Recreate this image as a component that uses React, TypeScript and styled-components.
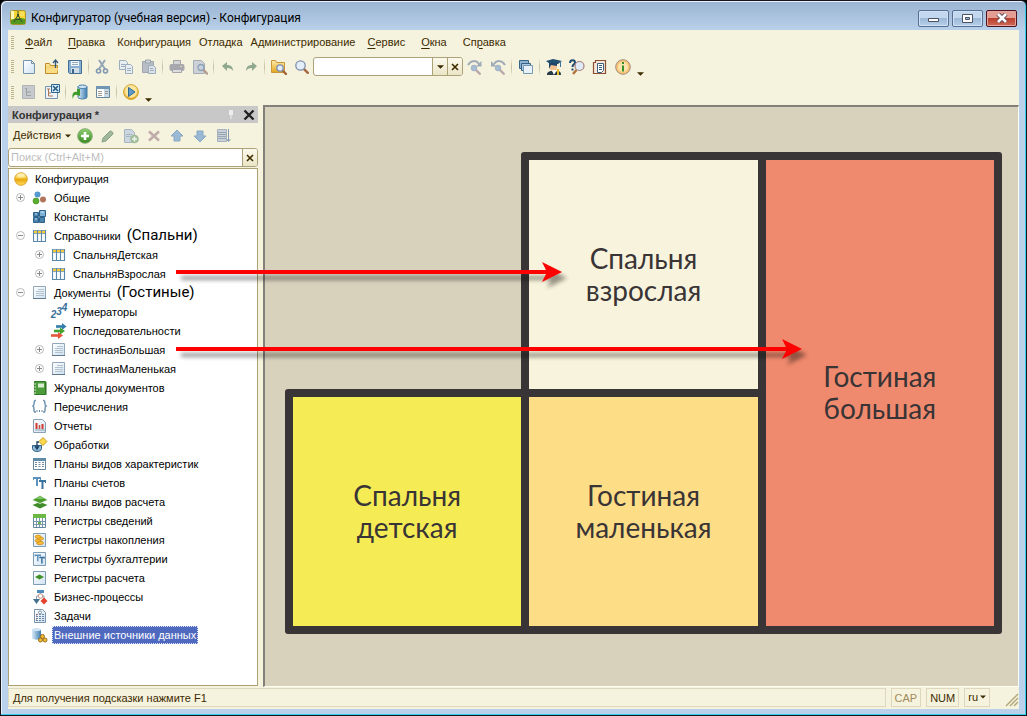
import React, { useState } from "react";
import styled, { createGlobalStyle } from "styled-components";

const UI = `"Liberation Sans", Arial, sans-serif`;
const CAPTION = `Roboto, "Noto Sans", sans-serif`;
const CREAM = "#f5f2dd";
const INK = "#3d2b00";
const EDGE = "#ada178";
const WALL = "#393435";

const GlobalStyle = createGlobalStyle`
  * { box-sizing: border-box; }
  body { margin: 0; background: #000; font: 11px/19px ${UI}; color: #000; }
  button, input { font: inherit; color: inherit; margin: 0; padding: 0; border: 0; background: none; }
  ul { list-style: none; margin: 0; padding: 0; }
`;

/* ---------- window ---------- */

const Window = styled.div`
  min-height: 100vh;
  display: flex;
  flex-direction: column;
  padding: 1px 7px 6px;
  border: 1px solid #16161c;
  border-radius: 6px 6px 0 0;
  background: linear-gradient(#9ab3d1, #b9d1ea 30px);
  box-shadow: inset -1px -1px 0 #35cdea, inset 1px 1px 0 #e9f1fa;
`;

const TitleBar = styled.header`
  display: flex;
  align-items: center;
  height: 28px;
  gap: 5px;
  padding: 4px 2px 0 2px;
`;

const Title = styled.h1`
  flex: 1;
  margin: 0;
  font: 400 12px/20px ${CAPTION};
`;

const WindowButtons = styled.div`
  display: flex;
  gap: 3px;
`;

const WindowButton = styled.button<{ $danger?: boolean }>`
  display: flex;
  align-items: center;
  justify-content: center;
  width: 31px;
  height: 17px;
  border: 1px solid ${(p) => (p.$danger ? "#4c1220" : "#566f92")};
  border-radius: 2px;
  background: ${(p) =>
    p.$danger
      ? "linear-gradient(#e39d92 45%, #bb3f2b 50%, #cf6a58)"
      : "linear-gradient(#c3d8ee 45%, #9db9d8 50%, #b6cfea)"};
  box-shadow: inset 0 0 0 1px ${(p) => (p.$danger ? "#e5a599" : "#cfe1f4")};
`;

const Body = styled.div`
  position: relative;
  flex: 1;
  display: flex;
  flex-direction: column;
  background: ${CREAM};
`;

/* ---------- menu and toolbars ---------- */

const Bar = styled.div<{ $height: number }>`
  display: flex;
  align-items: center;
  height: ${(p) => p.$height}px;
  padding-left: 3px;
`;

const Grip = styled.span`
  width: 3px;
  height: 13px;
  margin-right: 3px;
  background: repeating-linear-gradient(#bcb48f 0 1px, transparent 1px 2px);
`;

const MenuItem = styled.button<{ $wide: boolean }>`
  padding: 0 ${(p) => (p.$wide ? 8 : 4)}px;
  color: ${INK};
  white-space: nowrap;
  u { text-underline-offset: 2px; }
`;

const MenuList = styled.nav`
  display: flex;
`;

const ToolButton = styled.button`
  display: flex;
  flex: none;
  align-items: center;
  justify-content: center;
  width: 23px;
  height: 22px;
`;

const Separator = styled.span`
  width: 1px;
  height: 18px;
  margin: 0 2px;
  background: linear-gradient(transparent, #c4bda0, transparent);
`;

const Overflow = styled.button`
  align-self: flex-end;
  display: flex;
  width: 12px;
  height: 10px;
  align-items: center;
  justify-content: center;
`;

const Field = styled.div<{ $width?: string }>`
  display: flex;
  width: ${(p) => p.$width || "auto"};
  height: 19px;
  border: 1px solid ${EDGE};
  border-radius: 3px;
  background: #fff;
  overflow: hidden;
  input {
    flex: 1;
    min-width: 0;
    padding: 0 2px;
    outline: 0;
  }
  input::placeholder { color: #bdbdbd; opacity: 1; }
`;

const FieldButton = styled.button`
  display: flex;
  align-items: center;
  justify-content: center;
  width: 15px;
  border-left: 1px solid ${EDGE};
  background: linear-gradient(#fbf9ec, #ebe5c6);
`;

/* ---------- configuration panel ---------- */

const Workspace = styled.main`
  flex: 1;
  display: flex;
  gap: 5px;
`;

const Panel = styled.aside`
  flex: none;
  display: flex;
  flex-direction: column;
  width: 250px;
  padding: 1px 0;
`;

const PanelHeader = styled.div`
  display: flex;
  align-items: center;
  height: 17px;
  padding: 0 3px 0 4px;
  background: #c8c8c8;
  h2 {
    flex: 1;
    margin: 0;
    font-size: 11px;
    line-height: 16px;
    color: #333;
  }
`;

const PinButton = styled.button`
  display: flex;
  margin-right: 9px;
`;

const PanelClose = styled.button`
  display: flex;
`;

const PanelTools = styled.div`
  display: flex;
  align-items: center;
  height: 25px;
  padding-left: 5px;
`;

const ActionsButton = styled.button`
  display: flex;
  align-items: center;
  justify-content: space-between;
  width: 58px;
  margin-right: 2px;
  color: ${INK};
`;

const Tree = styled.ul`
  flex: 1;
  margin-top: 1px;
  padding-bottom: 40px;
  border: 1px solid ${EDGE};
  background: #fff;
`;

const TreeRow = styled.li<{ $level: number }>`
  display: flex;
  align-items: center;
  height: 19px;
  padding-left: ${(p) => (p.$level ? (p.$level - 1) * 19 : 4)}px;
  white-space: nowrap;
`;

const Expander = styled.span`
  display: flex;
  flex: none;
  width: 23px;
  padding-left: 7px;
  button { display: flex; }
`;

const TreeLabel = styled.span<{ $selected?: boolean }>`
  height: 18px;
  margin-left: 4px;
  padding: 0 1px;
  line-height: 16px;
  border: 1px dotted ${(p) => (p.$selected ? "#dfe6ff" : "transparent")};
  background: ${(p) => (p.$selected ? "#4f69bf" : "transparent")};
  color: ${(p) => (p.$selected ? "#fff" : "#000")};
`;

const Note = styled.span`
  margin-left: 4px;
  font: 15px/17px ${CAPTION};
`;

/* ---------- plan ---------- */

const Canvas = styled.section`
  flex: 1;
  display: flex;
  padding: 45px 16px 52px 20px;
  border: 2px solid #828078;
  border-right: 1px solid #fffef5;
  border-bottom: 1px solid #fffef5;
  background: #d8d2bd;
`;

const FloorPlan = styled.div`
  flex: 1;
  display: grid;
  grid-template-columns: repeat(3, 1fr);
  grid-template-rows: repeat(2, 1fr);
  grid-template-areas: ". adult big" "child small big";
  padding: 4px;
`;

/* Neighbouring rooms share one wall: each overlaps the next by half its thickness. */
const Room = styled.div<{ $area: string; $color: string }>`
  grid-area: ${(p) => p.$area};
  display: flex;
  align-items: center;
  justify-content: center;
  margin: -4px;
  padding-bottom: 2px;
  border: 8px solid ${WALL};
  border-radius: 3px;
  text-align: center;
  background: ${(p) => p.$color};
  font: 400 28px/32px Lato, sans-serif;
  color: ${WALL};
`;

const Arrows = styled.svg`
  position: absolute;
  left: 0;
  top: 0;
  pointer-events: none;
`;

/* ---------- status bar ---------- */

const StatusBar = styled.footer`
  display: flex;
  align-items: center;
  gap: 5px;
  height: 22px;
  padding-bottom: 2px;
  color: ${INK};
`;

const StatusCell = styled.div<{ $grow?: boolean; $dim?: boolean }>`
  flex: ${(p) => (p.$grow ? 1 : "none")};
  height: 19px;
  padding: 0 ${(p) => (p.$grow ? 4 : 3)}px;
  line-height: 18px;
  border: 1px solid #ddd7bd;
  color: ${(p) => (p.$dim ? "#a08b5a" : INK)};
`;

const LanguageButton = styled.button`
  display: flex;
  align-items: center;
  gap: 2px;
  height: 19px;
  padding: 0 3px;
  border: 1px solid #ddd7bd;
`;

/* ---------- icons ---------- */

const Gradients = () => (
  <svg width="0" height="0" style={{ position: "absolute" }} aria-hidden="true">
    <defs>
      <linearGradient id="paper" x2="1" y2="1"><stop stopColor="#fff" /><stop offset="1" stopColor="#cfe2f2" /></linearGradient>
      <linearGradient id="gold" x2="0" y2="1"><stop stopColor="#ffedaa" /><stop offset="1" stopColor="#e3a51c" /></linearGradient>
      <linearGradient id="blue" x2="1"><stop stopColor="#d9ebf7" /><stop offset="1" stopColor="#3e7db1" /></linearGradient>
      <linearGradient id="green" x2="0" y2="1"><stop stopColor="#8fd073" /><stop offset="1" stopColor="#36871f" /></linearGradient>
      <linearGradient id="ball" x2="0" y2="1"><stop stopColor="#fff0ae" /><stop offset=".4" stopColor="#f8cf4a" /><stop offset=".55" stopColor="#e9a70f" /><stop offset="1" stopColor="#ffdf5e" /></linearGradient>
    </defs>
  </svg>
);

const lens = (cx: number, cy: number, r: number, fill = "#e3eefa", stroke = "#7e8fae", handle = "#a5683e") => (
  <>
    <path d={`M${cx + r * 0.7} ${cy + r * 0.7}l4 4`} stroke={handle} strokeWidth="2.4" strokeLinecap="round" />
    <circle cx={cx} cy={cy} r={r} fill={fill} stroke={stroke} strokeWidth="1.3" />
  </>
);

const table = (
  <>
    <path d="M1.500 2h4v12h-4zM6 2h4v12H6zM10.500 2h4v12h-4z" fill="#eef6fb" />
    <path d="M1 2h13v4H1z" fill="#8ba7b4" />
    <path d="M1.500 2v12M5.500 2v12M9.500 2v12M13.500 2v12M1 13.500h13" stroke="#5c88aa" />
    <path d="M2 3h3v2H2zM6 3h3v2H6zM10 3h3v2h-3z" fill="#f7ca35" />
    <path d="M3 7h1v6H3zM7 7h1v6H7zM11 7h1v6h-1z" fill="#fff" />
  </>
);

const docLines = (
  <>
    <path d="M1.500 1.500h12v12h-12z" fill="url(#paper)" stroke="#93a7b8" />
    <path d="M1 13.500h13" stroke="#61788c" />
    <path d="M6 4.500h6M4 6.500h8M4 8.500h8M4 10.500h8" stroke="#b4c3d0" />
  </>
);

const tt = (
  <>
    <path d="M1 3h8M5 3v8" stroke="#5a91be" strokeWidth="2" />
    <path d="M1.500 2v3M8.500 2v3" stroke="#5a91be" />
    <path d="M7 6h7M10.500 6v8" stroke="#38729f" strokeWidth="2" />
    <path d="M13.500 5v3" stroke="#38729f" />
  </>
);

const framed = <path d="M1.500 1.500h12v13h-12z" fill="url(#paper)" stroke="#7f9db5" />;

const ICONS: Record<string, React.ReactNode> = {
  app: (
    <>
      <rect x="0.500" y="0.500" width="15" height="14" rx="2" fill="#f7d535" stroke="#a5952a" />
      <path d="M1 10c4-2 9-3 14-1v5H1z" fill="#55981f" />
      <path d="M1 1h3v8H1z" fill="#fff6bd" />
      <path d="M4 12l4-7 4 7M8 1v5M5.500 9.500h5" stroke="#3b4f2a" fill="none" />
      <path d="M7 4h2v3H7z" fill="#3b4f2a" />
      <path d="M10 3h4M10 5h4" stroke="#fbe988" />
    </>
  ),
  new: <path d="M2.500 1.500h8l3 3v10h-11zM10.500 1.500v3h3" fill="url(#paper)" stroke="#7894ad" />,
  open: (
    <>
      <path d="M1.500 14.500v-10h4l1 2h7v8z" fill="url(#gold)" stroke="#bf8c28" />
      <path d="M2 9h12l-1 5H2z" fill="#fbdc86" />
      <path d="M11.500 9V2M9 4l2.500-3L14 4" stroke="#31577a" fill="none" strokeWidth="1.300" />
    </>
  ),
  save: (
    <>
      <path d="M1.500 1.500h13v13h-12l-1-1z" fill="#86afd2" stroke="#436d93" />
      <path d="M4 2h8v5H4z" fill="#f3f8fc" />
      <path d="M5 3.500h6M5 5.500h6" stroke="#9ab" />
      <path d="M4 9h8v5H4z" fill="#d2dce5" />
      <path d="M5 10h2v4H5z" fill="#3d6589" />
    </>
  ),
  cut: (
    <>
      <path d="M4 1l6 9M10 1L4 10" stroke="#93a6b8" strokeWidth="2" />
      <circle cx="3.500" cy="12" r="2" fill="none" stroke="#8197b0" strokeWidth="1.600" />
      <circle cx="10.500" cy="12" r="2" fill="none" stroke="#8197b0" strokeWidth="1.600" />
    </>
  ),
  copy: (
    <g stroke="#9badbf" fill="#e8edf0">
      <path d="M1.500 1.500h6l2 2v7h-8z" />
      <path d="M3 5.500h4M3 7.500h4" />
      <path d="M7.500 5.500h5l2 2v7h-7z" />
      <path d="M9 9.500h4M9 11.500h4" />
    </g>
  ),
  paste: (
    <>
      <path d="M1.500 2.500h11v11h-11z" fill="#b9bec4" stroke="#a0a7b0" />
      <path d="M4.500 1h5v3h-5z" fill="#cfd4d9" stroke="#99a3ad" />
      <path d="M7.500 6.500h5l2 2v6h-7z" fill="#dce1e7" stroke="#9badbf" />
      <path d="M9 9.500h3M9 11.500h4" stroke="#9badbf" />
    </>
  ),
  print: (
    <>
      <path d="M4.500 1.500h7v5h-7z" fill="#d4d4d4" stroke="#a4a5aa" />
      <rect x="0.500" y="5" width="15" height="7" rx="2" fill="#a7a8ae" />
      <path d="M3.500 10.500h9v3h-9z" fill="#dddde0" stroke="#a4a5aa" />
      <path d="M11 7.500h2" stroke="#e8c9a8" />
    </>
  ),
  preview: (
    <>
      <path d="M1.500 1.500h8l3 3v10h-11z" fill="#ced2d7" stroke="#a3adb8" />
      {lens(9, 8.5, 3, "#c8d2de", "#8fa1b6", "#b49c90")}
    </>
  ),
  undo: <path d="M2 7l5-4v3c4 0 6 2 6 6-1-2-3-3-6-3v3z" fill="#8fa88e" />,
  redo: <path d="M14 7L9 3v3c-4 0-6 2-6 6 1-2 3-3 6-3v3z" fill="#8fa88e" />,
  findFile: (
    <>
      <path d="M.5 13.500v-12h4l1 2h8v10z" fill="url(#gold)" stroke="#c7973a" />
      {lens(9, 9, 3.2)}
    </>
  ),
  zoom: lens(6.5, 6.5, 4.700),
  findNext: (
    <>
      <path d="M1 6c3-5 8-5 11-1" fill="none" stroke="#9fabb7" strokeWidth="2" />
      <path d="M14.500 2v5.500H9z" fill="#9fabb7" />
      {lens(7, 9, 2.5, "#a8bfd6", "#a3b5c7", "#b7a9ab")}
    </>
  ),
  findPrev: (
    <>
      <path d="M15 6C12 1 7 1 4 5" fill="none" stroke="#9fabb7" strokeWidth="2" />
      <path d="M1 2v5.500h5.500z" fill="#9fabb7" />
      {lens(8, 9, 2.5, "#a8bfd6", "#a3b5c7", "#b7a9ab")}
    </>
  ),
  windows: (
    <g fill="#e9f2f9" stroke="#386385">
      <path d="M1.500 1.500h9v8h-9z" fill="#8db4d1" />
      <path d="M3.500 4.500h9v7h-9z" fill="#a9c9e0" />
      <path d="M5.500 6.500h9v8h-9z" stroke="#7598b4" />
    </g>
  ),
  assistant: (
    <>
      <path d="M3 5h8v3c0 5-6 5-7 2z" fill="#f3c08f" />
      <path d="M0 2l7-2 9 2-4 3H4z" fill="#23506f" />
      <path d="M3 4h8v3l-6-1-2 4z" fill="#1d4567" />
      <path d="M14.500 2v6" stroke="#41749c" />
      <path d="M1 16c0-3 2-4 5-4l2 3 3-3c3 0 4 1 4 4z" fill="#263a47" />
      <path d="M6 11h4l-2 5z" fill="#fff" />
      <path d="M12 10v6" stroke="#e8ba25" strokeWidth="2" />
    </>
  ),
  helpSearch: (
    <>
      <path d="M1 4c0-4 5-3.500 5-.5C6 5.500 3.500 5 3.500 8M3.500 9.500v2" fill="none" stroke="#214b6e" strokeWidth="2" />
      <path d="M7.500 11L4 15" stroke="#b0703f" strokeWidth="2.400" />
      <circle cx="10.500" cy="7" r="4.500" fill="#dfeaf8" stroke="#a77e7a" strokeWidth="1.200" />
    </>
  ),
  syntax: (
    <>
      <path d="M1.500 3.500h2v-2h10v13h-12z" fill="#f8e6d8" stroke="#8b4f36" strokeWidth="1.200" />
      <path d="M5.500 4.500h6v7l-2 2h-4z" fill="#fff" stroke="#39607f" />
      <path d="M7 6.500h3M7 8.500h3M7 10.500h3" stroke="#39607f" />
    </>
  ),
  info: (
    <>
      <circle cx="8" cy="8" r="7.300" fill="#fbc476" stroke="#a08f7c" />
      <circle cx="8" cy="8" r="5" fill="#fde3ac" />
      <path d="M8 3v2M8 6.500v6" stroke="#37902d" strokeWidth="2" />
    </>
  ),
  configOpen: (
    <>
      <path d="M1.500 1.500h12v13h-12z" fill="#c7cacd" stroke="#b1b5b9" />
      <path d="M4 4.500h2M5.500 5v6.500H10M5.500 8H10" stroke="#9aa0a6" fill="none" />
    </>
  ),
  configClose: (
    <>
      <path d="M1.500 2.500h12v12h-12z" fill="#eef4f9" stroke="#7694ad" />
      <path d="M3 5h3M4.500 5v7H9M4.500 9H7" stroke="#aa7650" fill="none" />
      <path d="M7.500.5h8v8h-8z" fill="#d6eaf8" stroke="#2d668e" />
      <path d="M9 2l5 5M14 2L9 7" stroke="#245980" strokeWidth="1.500" />
    </>
  ),
  database: (
    <>
      <path d="M6 2.500h9v11c-2 2-7 2-9 0z" fill="url(#blue)" stroke="#477fa9" />
      <ellipse cx="10.500" cy="2.800" rx="4.500" ry="1.800" fill="#cfe5f4" stroke="#477fa9" />
      <path d="M1 15c-2-5 1-8 4-7V5h3v7l-3-1c-2-1-4 1-4 4z" fill="#3c9b2b" />
    </>
  ),
  properties: (
    <>
      <path d="M1.500 2.500h13v11h-13z" fill="#fff" stroke="#64869f" />
      <path d="M1 2h14v3H1z" fill="#6f97b5" />
      <path d="M9 5h5v8H9z" fill="#c8d9e6" />
      <path d="M3 7.500h4M3 9.500h4M3 11.500h4M10 7.500h3M10 9.500h3" stroke="#9f9a8e" />
    </>
  ),
  run: (
    <>
      <circle cx="8" cy="8" r="7.400" fill="url(#gold)" stroke="#d3a32a" />
      <circle cx="8" cy="8" r="5.800" fill="#fbe6a0" />
      <path d="M5.500 3.500L12 8l-6.500 4.500z" fill="#5f9cc9" stroke="#2f6790" />
    </>
  ),
  add: (
    <>
      <circle cx="8" cy="8" r="7.300" fill="url(#green)" stroke="#86ab74" />
      <path d="M8 4v8M4 8h8" stroke="#fff" strokeWidth="2.600" />
    </>
  ),
  edit: <path d="M2 14l1-4 7-7c2 0 3 1 3 3l-7 7z" fill="#9fb89b" stroke="#8ba489" />,
  addDoc: (
    <>
      <path d="M1.500 1.500h7l3 3v10h-10z" fill="#cdd6df" stroke="#a6b5c3" />
      <path d="M3 6.500h6M3 8.500h5" stroke="#a6b5c3" />
      <circle cx="11.500" cy="11" r="4.300" fill="#9dba99" />
      <path d="M11.500 8.500v5M9 11h5" stroke="#eef3ea" strokeWidth="1.600" />
    </>
  ),
  remove: <path d="M3 3.500l10 9M13 3.500l-10 9" stroke="#c0aca8" strokeWidth="2.600" />,
  up: <path d="M8 2l6 6h-3v5H5V8H2z" fill="#9ab9d4" stroke="#89a8c4" />,
  down: <path d="M8 14l6-6h-3V3H5v5H2z" fill="#9ab9d4" stroke="#89a8c4" />,
  sort: (
    <>
      <path d="M2.500 1.500h9v12h-9z" fill="#c8d0d8" stroke="#a7b2be" />
      <path d="M3 4.500h8M3 6.500h8M3 8.500h8M3 10.500h8" stroke="#97a5b4" />
      <path d="M13.500 1v12M11.500 11l2 2.500 2-2.500" stroke="#8299b2" fill="none" />
    </>
  ),
  root: (
    <>
      <circle cx="8" cy="8" r="6.300" fill="url(#ball)" stroke="#dda431" />
      <ellipse cx="8" cy="4.500" rx="4" ry="2" fill="#fff8cf" opacity=".6" />
    </>
  ),
  common: (
    <>
      <circle cx="5.500" cy="4.500" r="3" fill="#5499cf" />
      <circle cx="4" cy="11" r="3" fill="#57ad2d" stroke="#3f891c" strokeWidth=".6" />
      <circle cx="11" cy="9.500" r="3" fill="#b2755b" />
    </>
  ),
  constants: (
    <g fill="#4b83ad" stroke="#2c628b">
      <path d="M7.500 1.500h6v6h-6z" fill="#7eb2d6" />
      <path d="M1.500 3.500h5v4h-5zM1.500 8.500h5v5h-5zM7.500 8.500h5v5h-5z" />
      <path d="M9 3h3M3 5h2M3 10h2" stroke="#cfe6f5" />
    </g>
  ),
  catalog: table,
  document: docLines,
  journal: (
    <>
      <path d="M2.500 1.500h11v13h-11z" fill="#4c9c3c" stroke="#2f7427" />
      <path d="M6 3.500h6v4H6z" fill="#d8edd0" />
      <path d="M1 4h3M1 7h3M1 10h3M1 13h3" stroke="#dbe8d2" />
      <path d="M14.500 2v13" stroke="#8fb987" />
    </>
  ),
  enumeration: (
    <>
      <path d="M4 1.500H3C1.500 1.500 3 6 1 7c2 1 0 6 2 6h1M11 1.500h1c1.500 0 0 4.500 2 5.500-2 1 0 6-2 6h-1" fill="none" stroke="#6f93b0" strokeWidth="1.500" />
      <path d="M4.500 12h1M7 12h1M9.500 12h1" stroke="#335f84" strokeWidth="1.500" />
    </>
  ),
  report: (
    <>
      <path d="M1.500 1.500h9l3 3v10h-12z" fill="url(#paper)" stroke="#8aa0b4" />
      <path d="M4.500 5v6M10.500 6v5" stroke="#d33a2c" strokeWidth="2" />
      <path d="M7.500 7v4" stroke="#c64d46" strokeWidth="1.500" />
      <path d="M3 12h10" stroke="#8aa0b4" />
    </>
  ),
  processing: (
    <>
      <path d="M11 .5l4 4-4 4-4-4z" fill="#fbd84c" stroke="#cb9a24" />
      <path d="M.5 8.500h9v3c0 4-9 4-9 0z" fill="#8fb9d8" stroke="#315f84" />
      <path d="M7 5H5v6M3 9l2 3 2-3" stroke="#173f60" fill="none" strokeWidth="1.300" />
    </>
  ),
  characteristics: (
    <>
      <path d="M1.500 2.500h12v11h-12z" fill="#fff" stroke="#64869f" />
      <path d="M1 2h13v3H1z" fill="#5f8bab" />
      <path d="M4 6v6M7.500 6v6M11 6v6" stroke="#71899d" strokeDasharray="1 1" strokeWidth="2" />
    </>
  ),
  accounts: tt,
  calcTypes: (
    <>
      <path d="M8 8l7.500 3-7.500 3.500L.5 11z" fill="#3f8d28" />
      <path d="M8 1.500L16 6 8 9.500 0 6z" fill="#4b9d30" stroke="#fff" strokeWidth=".7" />
      <path d="M8 2.500L12 5H4z" fill="#86c866" />
    </>
  ),
  infoRegister: (
    <>
      <path d="M1.500 1.500h12v13h-12z" fill="#fff" stroke="#64869f" />
      <path d="M1 1h13v4H1z" fill="#6bb944" />
      <path d="M4.500 5v9M7.500 5v9M10.500 5v9M2 8.500h11M2 11.500h11" stroke="#7897ae" />
      <path d="M6 9h3v2H6z" fill="#6bb944" />
    </>
  ),
  accumulation: (
    <>
      {framed}
      <g fill="#f6bd35" stroke="#c98415" strokeWidth=".7">
        <ellipse cx="8" cy="11" rx="3.500" ry="1.700" />
        <ellipse cx="6" cy="8.500" rx="3" ry="1.600" />
        <ellipse cx="8.500" cy="6.500" rx="3" ry="1.600" />
        <ellipse cx="6" cy="4.700" rx="3" ry="1.600" />
      </g>
    </>
  ),
  accounting: (
    <>
      {framed}
      <g transform="translate(2 2) scale(.75)">{tt}</g>
    </>
  ),
  calcRegister: (
    <>
      {framed}
      <path d="M7.500 4.500L12 7l-4.500 2.500L3 7z" fill="#419128" />
    </>
  ),
  business: (
    <>
      <path d="M5 1h7v3H5z" fill="#4e8bbb" />
      <path d="M8.500 4v3M5 7h7M4.500 7v4M12 7v4" stroke="#8aa0b4" />
      <circle cx="8.500" cy="7" r="2.300" fill="#fff" stroke="#c08f77" />
      <path d="M1 10h7l-3.500 5z" fill="#44708f" />
      <path d="M12 8.500l3.500 3.500-3.500 3.500L8.500 12z" fill="#e3432e" />
    </>
  ),
  task: (
    <>
      <path d="M2.500 1.500h8l3 3v10h-11z" fill="url(#paper)" stroke="#7894ad" />
      <path d="M4 6.500h8M4 8.500h8M4 10.500h8M4 12.500h8" stroke="#6884a0" strokeDasharray="2 1" />
      <circle cx="8" cy="4.500" r="1.500" fill="#fff" stroke="#7d91a3" />
      <path d="M4 7h1M4 11h1" stroke="#d0563a" />
    </>
  ),
  external: (
    <>
      <path d="M0 2.500h9v9c-2 1.500-7 1.500-9 0z" fill="url(#blue)" />
      <ellipse cx="4.500" cy="2.500" rx="4.500" ry="1.500" fill="#cfe5f4" />
      <g fill="#f0bf3a" stroke="#9d6d15">
        <circle cx="10.500" cy="9.500" r="2" />
        <circle cx="8.500" cy="13" r="2" />
        <circle cx="13" cy="13" r="2" />
      </g>
    </>
  ),
  sequences: (
    <g fill="none" strokeWidth="2.600">
      <path d="M5 3.500h7" stroke="#347cab" />
      <path d="M11 0l4.500 3.500L11 7z" fill="#347cab" />
      <path d="M3 8h7" stroke="#42a32d" />
      <path d="M9 4.500L14 8l-5 3.500z" fill="#42a32d" />
      <path d="M0 12.500h7" stroke="#e5563a" />
      <path d="M7 9l5 3.500L7 16z" fill="#e5563a" />
    </g>
  ),
};

const NumeratorGlyph = styled.span`
  display: flex;
  width: 16px;
  height: 16px;
  justify-content: center;
  align-items: flex-end;
  font: italic 700 10px/10px ${UI};
  color: #38709b;
  b:nth-child(2) { padding-bottom: 3px; }
  b:nth-child(3) { padding-bottom: 7px; }
`;

const Glyph = styled.svg`
  display: block;
  flex: none;
`;

const Icon = ({ name, size = 16 }: { name: string; size?: number }) =>
  name === "numerator" ? (
    <NumeratorGlyph aria-hidden="true"><b>2</b><b>3</b><b>4</b></NumeratorGlyph>
  ) : (
    <Glyph width={size} height={size} viewBox="0 0 16 16" fill="none" aria-hidden="true">{ICONS[name]}</Glyph>
  );

const Caret = ({ size = 7 }: { size?: number }) => (
  <Glyph width={size} height="4" viewBox="0 0 8 4" aria-hidden="true"><path d="M0 0h8L4 4z" fill={INK} /></Glyph>
);

const Cross = ({ size = 8, color = INK }: { size?: number; color?: string }) => (
  <Glyph width={size} height={size} viewBox="0 0 8 8" aria-hidden="true"><path d="M1 1l6 6M7 1L1 7" stroke={color} strokeWidth="1.600" /></Glyph>
);

const Toggle = ({ open }: { open: boolean }) => (
  <Glyph width="9" height="9" viewBox="0 0 9 9" fill="none" aria-hidden="true">
    <circle cx="4.500" cy="4.500" r="4" stroke="#b9b9b9" />
    <path d={open ? "M2 4.500h5" : "M2 4.500h5M4.500 2v5"} stroke="#888" />
  </Glyph>
);

/* ---------- data ---------- */

const MENU: [string, string, string][] = [
  ["", "Ф", "айл"],
  ["", "П", "равка"],
  ["Конфигурация", "", ""],
  ["Отладка", "", ""],
  ["Администрирование", "", ""],
  ["", "С", "ервис"],
  ["", "О", "кна"],
  ["Сп", "р", "авка"],
];

const MAIN_TOOLS: [string, string][][] = [
  [["new", "Новый"], ["open", "Открыть"], ["save", "Сохранить"]],
  [["cut", "Вырезать"], ["copy", "Копировать"], ["paste", "Вставить"]],
  [["print", "Печать"], ["preview", "Просмотр"]],
  [["undo", "Отменить"], ["redo", "Вернуть"]],
];

const HELP_TOOLS: [string, string][] = [
  ["assistant", "Советы"],
  ["helpSearch", "Поиск в справке"],
  ["syntax", "Синтакс-помощник"],
  ["info", "О программе"],
];

const PANEL_TOOLS: [string, string][] = [
  ["add", "Добавить"],
  ["edit", "Изменить"],
  ["addDoc", "Скопировать"],
  ["remove", "Удалить"],
  ["up", "Вверх"],
  ["down", "Вниз"],
  ["sort", "Упорядочить"],
];

type Node = { text: string; icon: string; level: number; open?: boolean; note?: string };

const NODES: Node[] = [
  { text: "Конфигурация", icon: "root", level: 0 },
  { text: "Общие", icon: "common", level: 1, open: false },
  { text: "Константы", icon: "constants", level: 1 },
  { text: "Справочники", icon: "catalog", level: 1, open: true, note: "(Спальни)" },
  { text: "СпальняДетская", icon: "catalog", level: 2, open: false },
  { text: "СпальняВзрослая", icon: "catalog", level: 2, open: false },
  { text: "Документы", icon: "document", level: 1, open: true, note: "(Гостиные)" },
  { text: "Нумераторы", icon: "numerator", level: 2 },
  { text: "Последовательности", icon: "sequences", level: 2 },
  { text: "ГостинаяБольшая", icon: "document", level: 2, open: false },
  { text: "ГостинаяМаленькая", icon: "document", level: 2, open: false },
  { text: "Журналы документов", icon: "journal", level: 1 },
  { text: "Перечисления", icon: "enumeration", level: 1 },
  { text: "Отчеты", icon: "report", level: 1 },
  { text: "Обработки", icon: "processing", level: 1 },
  { text: "Планы видов характеристик", icon: "characteristics", level: 1 },
  { text: "Планы счетов", icon: "accounts", level: 1 },
  { text: "Планы видов расчета", icon: "calcTypes", level: 1 },
  { text: "Регистры сведений", icon: "infoRegister", level: 1 },
  { text: "Регистры накопления", icon: "accumulation", level: 1 },
  { text: "Регистры бухгалтерии", icon: "accounting", level: 1 },
  { text: "Регистры расчета", icon: "calcRegister", level: 1 },
  { text: "Бизнес-процессы", icon: "business", level: 1 },
  { text: "Задачи", icon: "task", level: 1 },
  { text: "Внешние источники данных", icon: "external", level: 1 },
];

const ROOMS: [string, string, string, string][] = [
  ["adult", "#f8f3dc", "Спальня", "взрослая"],
  ["big", "#f08a6e", "Гостиная", "большая"],
  ["child", "#f5ec55", "Спальня", "детская"],
  ["small", "#fedd87", "Гостиная", "маленькая"],
];

const Arrow = ({ y, to }: { y: number; to: number }) => (
  <>
    <g fill="#000" opacity=".4" filter="url(#soft)" transform="translate(5 6)">
      <path d={`M168 ${y - 2}H${to - 14}v4H168z`} />
      <path d={`M${to} ${y}l-20-10 5 10-5 10z`} />
    </g>
    <path d={`M168 ${y - 2}H${to - 14}v4H168z`} fill="#f00" />
    <path d={`M${to} ${y}l-20-10 5 10-5 10z`} fill="#f00" />
  </>
);

const Tool = ({ icon, label }: { icon: string; label: string }) => (
  <ToolButton type="button" aria-label={label} title={label}><Icon name={icon} /></ToolButton>
);

export default function App() {
  const [selected, setSelected] = useState("Внешние источники данных");
  return (
    <Window>
      <GlobalStyle />
      <Gradients />
      <TitleBar>
        <Icon name="app" />
        <Title>Конфигуратор (учебная версия) - Конфигурация</Title>
        <WindowButtons>
          <WindowButton type="button" aria-label="Свернуть">
            <Glyph width="11" height="9" fill="none"><path d="M.5 4.500h10v3H.5z" fill="#fff" stroke="#4b5363" /></Glyph>
          </WindowButton>
          <WindowButton type="button" aria-label="Развернуть">
            <Glyph width="11" height="9" fill="none"><path d="M.5.5h10v8H.5z" fill="#fff" stroke="#4b5363" /><path d="M3.500 3.500h4v2h-4z" fill="#9fb8d5" stroke="#4b5363" /></Glyph>
          </WindowButton>
          <WindowButton type="button" aria-label="Закрыть" $danger>
            <Glyph width="12" height="10" fill="none">
              <path d="M2 1l8 8M10 1L2 9" stroke="#5b4552" strokeWidth="4.500" />
              <path d="M2 1l8 8M10 1L2 9" stroke="#fff" strokeWidth="2.600" />
            </Glyph>
          </WindowButton>
        </WindowButtons>
      </TitleBar>

      <Body>
        <Bar $height={24}>
          <Grip />
          <MenuList>
            {MENU.map(([before, key, after]) => (
              <MenuItem type="button" $wide={key !== ""} key={before + key + after}>{before}{key && <u>{key}</u>}{after}</MenuItem>
            ))}
          </MenuList>
        </Bar>

        <Bar $height={25} role="toolbar">
          <Grip />
          {MAIN_TOOLS.map((group, i) => (
            <React.Fragment key={i}>
              {group.map(([icon, label]) => <Tool key={icon} icon={icon} label={label} />)}
              <Separator />
            </React.Fragment>
          ))}
          <Tool icon="findFile" label="Поиск в файлах" />
          <Tool icon="zoom" label="Найти" />
          <Field $width="150px">
            <input aria-label="Строка поиска" />
            <FieldButton type="button" aria-label="История поиска"><Caret /></FieldButton>
            <FieldButton type="button" aria-label="Очистить строку поиска"><Cross /></FieldButton>
          </Field>
          <Tool icon="findNext" label="Найти следующий" />
          <Tool icon="findPrev" label="Найти предыдущий" />
          <Separator />
          <Tool icon="windows" label="Окна" />
          <Separator />
          {HELP_TOOLS.map(([icon, label]) => <Tool key={icon} icon={icon} label={label} />)}
          <Overflow type="button" aria-label="Другие команды"><Caret /></Overflow>
        </Bar>

        <Bar $height={26} role="toolbar">
          <Grip />
          <Tool icon="configOpen" label="Открыть конфигурацию" />
          <Tool icon="configClose" label="Закрыть конфигурацию" />
          <Separator />
          <Tool icon="database" label="Обновить базу данных" />
          <Tool icon="properties" label="Палитра свойств" />
          <Separator />
          <Tool icon="run" label="Запустить" />
          <Overflow type="button" aria-label="Другие команды отладки"><Caret /></Overflow>
        </Bar>

        <Workspace>
          <Panel>
            <PanelHeader>
              <h2>Конфигурация *</h2>
              <PinButton type="button" aria-label="Закрепить">
                <Glyph width="6" height="9"><path d="M1 0h4v5H1zM2.500 5h1v4h-1z" fill="#eee" /></Glyph>
              </PinButton>
              <PanelClose type="button" aria-label="Закрыть панель"><Cross size={12} color="#222" /></PanelClose>
            </PanelHeader>
            <PanelTools>
              <ActionsButton type="button">Действия <Caret size={6} /></ActionsButton>
              {PANEL_TOOLS.map(([icon, label]) => <Tool key={icon} icon={icon} label={label} />)}
            </PanelTools>
            <Field>
              <input aria-label="Поиск" placeholder="Поиск (Ctrl+Alt+M)" />
              <FieldButton type="button" aria-label="Очистить поиск"><Cross /></FieldButton>
            </Field>
            <Tree role="tree">
              {NODES.map((node) => (
                <TreeRow key={node.text} $level={node.level} role="treeitem" aria-selected={selected === node.text} onClick={() => setSelected(node.text)}>
                  {node.level > 0 && (
                    <Expander>
                      {node.open !== undefined && (
                        <button type="button" aria-label={node.open ? "Свернуть ветвь" : "Развернуть ветвь"}><Toggle open={node.open} /></button>
                      )}
                    </Expander>
                  )}
                  <Icon name={node.icon} />
                  <TreeLabel $selected={selected === node.text}>{node.text}</TreeLabel>
                  {node.note && <Note>{node.note}</Note>}
                </TreeRow>
              ))}
            </Tree>
          </Panel>

          <Canvas>
            <FloorPlan>
              {ROOMS.map(([area, color, first, second]) => (
                <Room key={area} $area={area} $color={color}><span>{first}<br />{second}</span></Room>
              ))}
            </FloorPlan>
          </Canvas>
        </Workspace>

        <StatusBar>
          <StatusCell $grow>Для получения подсказки нажмите F1</StatusCell>
          <StatusCell $dim>CAP</StatusCell>
          <StatusCell>NUM</StatusCell>
          <LanguageButton type="button">ru <Caret size={6} /></LanguageButton>
          <Glyph width="24" height="20" fill="none"><path d="M11 19L23 7M15 19l8-8M19 19l4-4" stroke="#b3a97e" strokeWidth="1.500" /></Glyph>
        </StatusBar>

        <Arrows width="100%" height="100%" aria-hidden="true">
          <defs>
            <filter id="soft" x="-5%" y="-100%" width="110%" height="300%"><feGaussianBlur stdDeviation="2" /></filter>
          </defs>
          <Arrow y={242} to={554} />
          <Arrow y={319} to={794} />
        </Arrows>
      </Body>
    </Window>
  );
}
